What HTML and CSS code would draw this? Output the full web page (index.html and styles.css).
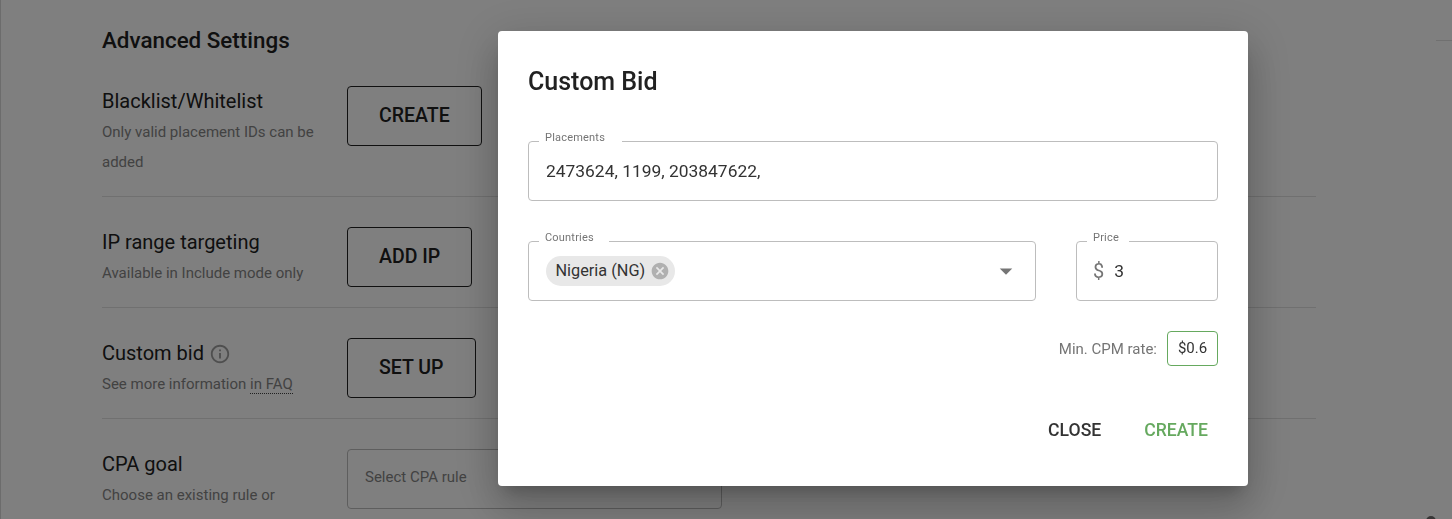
FILE: index.html
```html
<!DOCTYPE html>
<html lang="en">
<head>
    <meta charset="UTF-8">
    <title>Advanced Settings - Custom Bid</title>
    <link rel="stylesheet" href="styles.css">
</head>
<body>
    <div class="page">
        <div class="rail"></div>
        <div class="content">
            <h2 class="section-title">Advanced Settings</h2>

            <div class="setting-row">
                <div class="setting-info">
                    <div class="setting-name">Blacklist/Whitelist</div>
                    <div class="setting-desc">Only valid placement IDs can be added</div>
                </div>
                <button class="outline-btn">CREATE</button>
            </div>

            <div class="setting-row">
                <div class="setting-info">
                    <div class="setting-name">IP range targeting</div>
                    <div class="setting-desc">Available in Include mode only</div>
                </div>
                <button class="outline-btn">ADD IP</button>
            </div>

            <div class="setting-row">
                <div class="setting-info">
                    <div class="setting-name">Custom bid
                        <svg class="info-icon" viewBox="0 0 24 24"><path d="M11 7h2v2h-2zm0 4h2v6h-2zm1-9C6.48 2 2 6.48 2 12s4.48 10 10 10 10-4.48 10-10S17.52 2 12 2zm0 18c-4.41 0-8-3.59-8-8s3.59-8 8-8 8 3.59 8 8-3.59 8-8 8z"/></svg>
                    </div>
                    <div class="setting-desc">See more information <a class="faq-link">in FAQ</a></div>
                </div>
                <button class="outline-btn">SET UP</button>
            </div>

            <div class="setting-row">
                <div class="setting-info">
                    <div class="setting-name">CPA goal</div>
                    <div class="setting-desc">Choose an existing rule or</div>
                </div>
                <div class="cpa-select">Select CPA rule</div>
            </div>
        </div>
        <div class="aside">
            <span class="aside-dot"></span>
        </div>
    </div>

    <div class="backdrop"></div>

    <div class="dialog">
        <h2 class="dialog-title">Custom Bid</h2>

        <div class="field field-placements">
            <span class="field-label label-placements">Placements</span>
            <span class="field-value">2473624, 1199, 203847622,</span>
        </div>

        <div class="field-row">
            <div class="field field-countries">
                <span class="field-label label-countries">Countries</span>
                <span class="chip">
                    Nigeria (NG)
                    <svg class="chip-close" viewBox="0 0 24 24"><path d="M12 2C6.47 2 2 6.47 2 12s4.47 10 10 10 10-4.47 10-10S17.53 2 12 2zm5 13.59L15.59 17 12 13.41 8.41 17 7 15.59 10.59 12 7 8.41 8.41 7 12 10.59 15.59 7 17 8.41 13.41 12 17 15.59z"/></svg>
                </span>
                <svg class="select-arrow" viewBox="0 0 24 24"><path d="M7 10l5 5 5-5z"/></svg>
            </div>
            <div class="field field-price">
                <span class="field-label label-price">Price</span>
                <span class="price-sign">$</span>
                <span class="field-value">3</span>
            </div>
        </div>

        <div class="min-rate">
            <span class="min-rate-label">Min. CPM rate:</span>
            <span class="min-rate-value">$0.6</span>
        </div>

        <div class="dialog-actions">
            <button class="text-btn">CLOSE</button>
            <button class="text-btn text-btn-green">CREATE</button>
        </div>
    </div>
</body>
</html>
```

FILE: styles.css
```css
* {
    margin: 0;
    padding: 0;
    box-sizing: border-box;
    font-family: Roboto, 'Liberation Sans', sans-serif;
}

html, body {
    height: 100%;
    overflow: hidden;
    background: #fff;
}

.page {
    display: flex;
    height: 519px;
    overflow: hidden;
    color: #212121;
}

.rail {
    width: 1px;
    background: #d8d8d8;
}

.content {
    width: 1315px;
    padding-left: 101px;
}

.section-title {
    font-size: 22.4px;
    font-weight: 500;
    line-height: 30px;
    margin-top: 25px;
    margin-bottom: 1px;
}

.setting-row {
    display: flex;
    align-items: flex-start;
    padding: 30px 0 19px;
    border-bottom: 1px solid #e0e0e0;
}

.setting-info {
    width: 245px;
    padding-right: 20px;
}

.setting-name {
    display: flex;
    align-items: center;
    gap: 5px;
    font-size: 20px;
    line-height: 31px;
}

.setting-desc {
    font-size: 15px;
    line-height: 30px;
    color: #858585;
}

.info-icon {
    width: 22px;
    height: 22px;
    fill: #9e9e9e;
}

.faq-link {
    border-bottom: 1px dotted #424242;
}

.outline-btn {
    height: 60px;
    padding: 0 31px 2px;
    font-size: 19.5px;
    font-weight: 500;
    color: #212121;
    background: transparent;
    border: 1px solid #212121;
    border-radius: 4px;
}

.cpa-select {
    width: 375px;
    height: 60px;
    padding: 0 17px;
    font-size: 15px;
    line-height: 55px;
    color: #858585;
    border: 1px solid #bdbdbd;
    border-radius: 4px;
}

.aside {
    flex: 1;
    margin: 40px 0 0 120px;
    border-top: 1px solid #e0e0e0;
    position: relative;
}

.aside-dot {
    position: absolute;
    left: -10px;
    top: 475px;
    width: 10px;
    height: 10px;
    border-radius: 50%;
    background: #6e6e6e;
}

.backdrop {
    position: fixed;
    inset: 0;
    background: rgba(0, 0, 0, 0.5);
}

.dialog {
    position: fixed;
    left: 498px;
    top: 31px;
    width: 750px;
    height: 455px;
    padding: 30px;
    background: #fff;
    border-radius: 4px;
    box-shadow: 0 11px 15px -7px rgba(0, 0, 0, 0.2), 0 24px 38px 3px rgba(0, 0, 0, 0.14), 0 9px 46px 8px rgba(0, 0, 0, 0.12);
    color: #212121;
}

.dialog-title {
    font-size: 25px;
    font-weight: 500;
    line-height: 42px;
    margin-bottom: 38px;
}

.field {
    position: relative;
    display: flex;
    align-items: center;
    height: 60px;
    padding: 0 16px;
    border: 1px solid #bdbdbd;
    border-radius: 4px;
}

.field-label {
    position: absolute;
    left: 10px;
    top: -13px;
    padding: 0 6px;
    font-size: 11px;
    line-height: 18px;
    letter-spacing: 0.2px;
    color: #757575;
    background: linear-gradient(#fff 0, #fff 13px, transparent 13px);
}

.label-placements {
    padding-right: 17px;
}

.label-countries {
    padding-right: 15px;
}

.label-price {
    padding-right: 10px;
}

.field-placements {
    padding-left: 17px;
}

.field-value {
    font-size: 17.4px;
    color: #333;
}

.field-row {
    display: flex;
    gap: 40px;
    margin-top: 40px;
}

.field-countries {
    flex: 1;
    justify-content: space-between;
    padding-left: 17px;
    padding-right: 17px;
}

.field-price {
    width: 142px;
}

.chip {
    display: inline-flex;
    align-items: center;
    gap: 5px;
    height: 30px;
    padding: 0 5px 2px 9.5px;
    font-size: 16.3px;
    color: #333;
    background: #e8e8e8;
    border-radius: 15px;
}

.chip-close {
    width: 20px;
    height: 20px;
    margin-top: 2px;
    fill: #b0b0b0;
}

.select-arrow {
    width: 30px;
    height: 30px;
    margin-right: -3px;
    fill: #757575;
}

.price-sign {
    font-size: 20px;
    color: #757575;
    margin-right: 10px;
}

.min-rate {
    display: flex;
    justify-content: flex-end;
    align-items: center;
    gap: 10px;
    margin-top: 30px;
}

.min-rate-label {
    font-size: 15px;
    color: #757575;
}

.min-rate-value {
    width: 51px;
    height: 35px;
    font-size: 15px;
    line-height: 33px;
    text-align: center;
    color: #333;
    border: 1px solid #66a95f;
    border-radius: 4px;
}

.dialog-actions {
    display: flex;
    justify-content: flex-end;
    gap: 43px;
    margin-top: 46px;
    padding-right: 10px;
}

.text-btn {
    font-size: 17.6px;
    font-weight: 500;
    line-height: 36px;
    color: #333;
    background: none;
    border: none;
}

.text-btn-green {
    color: #66a95f;
}
```
